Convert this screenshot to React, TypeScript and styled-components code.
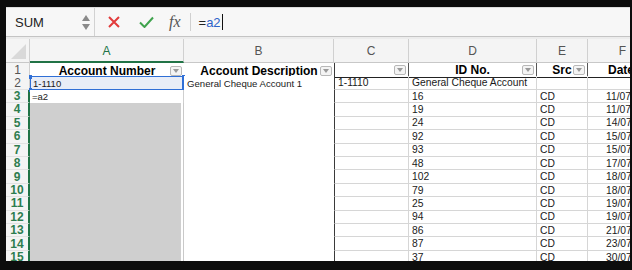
import React from "react";
import styled, { createGlobalStyle, css } from "styled-components";

const Global = createGlobalStyle`
  html, body { margin: 0; padding: 0; background: #0d0d0d; }
  body { font-family: "Liberation Sans", Arial, sans-serif; }
`;

const Frame = styled.div`
  width: 632px;
  height: 270px;
  box-sizing: border-box;
  padding: 7px 2px 9px 6px;
  overflow: hidden;
`;

const Window = styled.div`
  width: 624px;
  height: 254px;
  background: #fff;
  overflow: hidden;
  display: flex;
  flex-direction: column;
`;

const FormulaBar = styled.div`
  height: 30px;
  flex: none;
  box-sizing: border-box;
  display: flex;
  align-items: center;
  background: #f7f7f7;
  border-top: 1px solid #dedede;
  border-bottom: 1px solid #c4c4c4;
`;

const NameBox = styled.div`
  width: 89px;
  height: 100%;
  box-sizing: border-box;
  display: flex;
  align-items: center;
  justify-content: space-between;
  padding: 0 4px 0 9px;
  border-right: 1px solid #d2d2d2;
  font-size: 13px;
  color: #222;
`;

const Stepper = styled.div`
  display: flex;
  flex-direction: column;
  gap: 3px;
`;

const Actions = styled.div`
  display: flex;
  align-items: center;
  height: 100%;
  padding-left: 13px;
`;

const IconSlot = styled.div<{ $w: number }>`
  width: ${(p) => p.$w}px;
  display: flex;
  align-items: center;
  justify-content: flex-start;
`;

const Fx = styled.span`
  font-family: "Liberation Serif", "Times New Roman", serif;
  font-style: italic;
  font-size: 16px;
  color: #555;
  padding-right: 9px;
  border-right: 1px solid #d0d0d0;
  line-height: 18px;
`;

const FormulaText = styled.div`
  padding-left: 8px;
  font-size: 13px;
  color: #222;
  display: flex;
  align-items: center;
`;

const Ref = styled.span`
  color: #2f63c8;
`;

const Caret = styled.span`
  display: inline-block;
  width: 1px;
  height: 16px;
  background: #111;
  margin-left: 1px;
`;

const Band = styled.div`
  height: 2px;
  flex: none;
  background: #ececec;
`;

const COLS = "24px 154px 150px 75px 128px 51px 70px";

const HeaderRow = styled.div`
  display: grid;
  grid-template-columns: ${COLS};
  height: 24px;
  flex: none;
  background: #f4f4f4;
`;

const Corner = styled.div`
  box-sizing: border-box;
  border-right: 1px solid #d0d0d0;
  border-bottom: 1px solid #c8c8c8;
  display: flex;
  align-items: flex-end;
  justify-content: flex-end;
  padding: 0 3px 3px 0;
`;

const ColHead = styled.div<{ $active?: boolean }>`
  box-sizing: border-box;
  display: flex;
  align-items: center;
  justify-content: center;
  font-size: 12px;
  color: ${(p) => (p.$active ? "#217346" : "#555")};
  border-right: 1px solid #d0d0d0;
  border-bottom: ${(p) => (p.$active ? "2px solid #217346" : "1px solid #c8c8c8")};
  padding-top: ${(p) => (p.$active ? "1px" : "0")};
`;

const Row = styled.div`
  display: grid;
  grid-template-columns: ${COLS};
  height: 13.43px;
  flex: none;
`;

const RowHead = styled.div<{ $active?: boolean }>`
  box-sizing: border-box;
  background: #f4f4f4;
  display: flex;
  align-items: center;
  justify-content: center;
  font-size: 12px;
  line-height: 1;
  color: ${(p) => (p.$active ? "#2e7d4f" : "#555")};
  font-weight: ${(p) => (p.$active ? "bold" : "normal")};
  border-bottom: 1px solid #e2e2e2;
  border-right: ${(p) => (p.$active ? "2px solid #217346" : "1px solid #cfcfcf")};
  overflow: hidden;
`;

type Kind = "title" | "sel" | "edit" | "shade" | "plain" | "tableHead" | "grid";

const Cell = styled.div<{ $kind: Kind; $align?: "left" | "center"; $dark?: boolean }>`
  position: relative;
  box-sizing: border-box;
  display: flex;
  align-items: center;
  overflow: visible;
  white-space: nowrap;
  font-size: 10px;
  color: #1a1a1a;
  padding: 0 2px;
  justify-content: ${(p) => (p.$align === "center" ? "center" : "flex-start")};
  ${(p) =>
    p.$dark &&
    css`
      border-left: 1px solid #3a3a3a;
    `}
  ${(p) => {
    switch (p.$kind) {
      case "title":
        return css`
          font-weight: bold;
          font-size: 12px;
          color: #000;
        `;
      case "tableHead":
        return css`
          font-weight: bold;
          font-size: 12px;
          color: #000;
          border-right: 1px solid #555;
          border-bottom: 1px solid #222;
        `;
      case "sel":
        return css`
          background: #e8edf7;
          border: 1px solid #2f6fd6;
          border-right-width: 2px;
          font-size: 9.5px;
          padding-left: 2px;
        `;
      case "edit":
        return css`
          background: #fff;
          font-size: 9.5px;
          border-right: 1px solid #cfcfcf;
        `;
      case "shade":
        return css`
          background: #cfcfcf;
          box-shadow: inset -2px 0 0 #fff;
          border-right: 1px solid #c9c9c9;
        `;
      case "plain":
        return css`
          background: #fff;
          font-size: 9.6px;
          padding-left: 3px;
        `;
      case "grid":
        return css`
          border-right: 1px solid #d6d6d6;
          border-bottom: 1px solid #d6d6d6;
          font-size: 10.3px;
          padding-left: 3px;
        `;
    }
  }}
`;

const FilterBtn = styled.span`
  position: absolute;
  right: 2px;
  top: 50%;
  margin-top: -5px;
  width: 12px;
  height: 10px;
  box-sizing: border-box;
  border: 1px solid #b8b8b8;
  border-radius: 2px;
  background: #f4f4f4;
  display: flex;
  align-items: center;
  justify-content: center;
  &::after {
    content: "";
    border-left: 3px solid transparent;
    border-right: 3px solid transparent;
    border-top: 4px solid #9a9a9a;
  }
`;

const Handle = styled.span<{ $pos: "tl" | "tr" | "bl" | "br" }>`
  position: absolute;
  width: 3px;
  height: 4px;
  background: #2f6fd6;
  ${(p) => (p.$pos[0] === "t" ? "top: -2px;" : "bottom: -3px;")}
  ${(p) => (p.$pos[1] === "l" ? "left: -2px;" : "right: -3px;")}
`;

const HeadDate = styled.span`
  padding-left: 18px;
`;

const DateText = styled.span`
  padding-left: 15px;
`;

const data: [string, string][] = [
  ["16", "11/07/2019"],
  ["19", "11/07/2019"],
  ["24", "14/07/2019"],
  ["92", "15/07/2019"],
  ["93", "15/07/2019"],
  ["48", "17/07/2019"],
  ["102", "18/07/2019"],
  ["79", "18/07/2019"],
  ["25", "19/07/2019"],
  ["94", "19/07/2019"],
  ["86", "21/07/2019"],
  ["87", "23/07/2019"],
  ["37", "30/07/2019"],
];

const Grid = styled.div`
  display: flex;
  flex-direction: column;
  flex: 1;
  overflow: hidden;
`;

export default function App() {
  return (
    <Frame>
      <Global />
      <Window>
        <FormulaBar>
          <NameBox>
            <span>SUM</span>
            <Stepper>
              <svg width="8" height="6" viewBox="0 0 8 6">
                <path d="M4 0 L8 6 L0 6 Z" fill="#8a8a8a" />
              </svg>
              <svg width="8" height="6" viewBox="0 0 8 6">
                <path d="M0 0 L8 0 L4 6 Z" fill="#8a8a8a" />
              </svg>
            </Stepper>
          </NameBox>
          <Actions>
            <IconSlot $w={31}>
              <svg width="12" height="12" viewBox="0 0 12 12">
                <path d="M1 1 L11 11 M11 1 L1 11" stroke="#e23b3b" strokeWidth="2" />
              </svg>
            </IconSlot>
            <IconSlot $w={30}>
              <svg width="15" height="12" viewBox="0 0 15 12">
                <path d="M1 6.5 L5.5 11 L14 1.5" stroke="#3fa34d" strokeWidth="2" fill="none" />
              </svg>
            </IconSlot>
            <Fx>fx</Fx>
          </Actions>
          <FormulaText>
            <span>=</span>
            <Ref>a2</Ref>
            <Caret />
          </FormulaText>
        </FormulaBar>
        <Band />
        <Grid>
          <HeaderRow>
            <Corner>
              <svg width="15" height="15" viewBox="0 0 15 15">
                <path d="M15 0 L15 15 L0 15 Z" fill="#d9d9d9" />
              </svg>
            </Corner>
            <ColHead $active>A</ColHead>
            <ColHead>B</ColHead>
            <ColHead>C</ColHead>
            <ColHead>D</ColHead>
            <ColHead>E</ColHead>
            <ColHead>F</ColHead>
          </HeaderRow>

          <Row>
            <RowHead>1</RowHead>
            <Cell $kind="title" $align="center">
              Account Number
              <FilterBtn />
            </Cell>
            <Cell $kind="title" $align="center">
              Account Description
              <FilterBtn />
            </Cell>
            <Cell $kind="tableHead" $dark>
              <FilterBtn />
            </Cell>
            <Cell $kind="tableHead" $align="center">
              ID No.
              <FilterBtn />
            </Cell>
            <Cell $kind="tableHead" $align="center">
              Src
              <FilterBtn />
            </Cell>
            <Cell $kind="tableHead">
              <HeadDate>Date</HeadDate>
            </Cell>
          </Row>

          <Row>
            <RowHead>2</RowHead>
            <Cell $kind="sel">
              1-1110
              <Handle $pos="tl" />
              <Handle $pos="tr" />
              <Handle $pos="bl" />
              <Handle $pos="br" />
            </Cell>
            <Cell $kind="plain">General Cheque Account 1</Cell>
            <Cell $kind="grid" $dark>1-1110</Cell>
            <Cell $kind="grid">General Cheque Account</Cell>
            <Cell $kind="grid" />
            <Cell $kind="grid" />
          </Row>

          {data.map(([id, date], i) => (
            <Row key={i}>
              <RowHead $active>{i + 3}</RowHead>
              {i === 0 ? <Cell $kind="edit">=a2</Cell> : <Cell $kind="shade" />}
              <Cell $kind="plain" />
              <Cell $kind="grid" $dark />
              <Cell $kind="grid">{id}</Cell>
              <Cell $kind="grid">CD</Cell>
              <Cell $kind="grid">
                <DateText>{date}</DateText>
              </Cell>
            </Row>
          ))}
        </Grid>
      </Window>
    </Frame>
  );
}
